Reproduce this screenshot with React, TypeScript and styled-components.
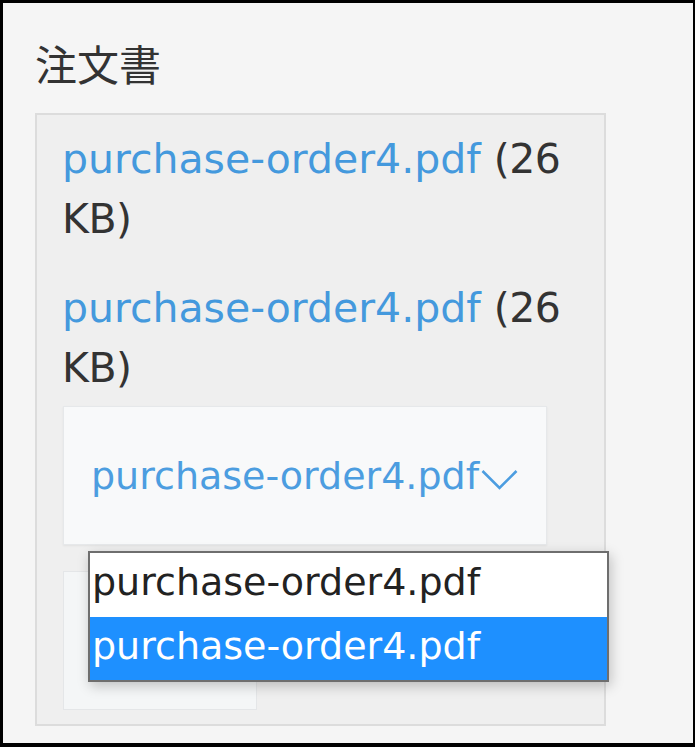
import React from 'react';
import styled, { createGlobalStyle } from 'styled-components';

const GlobalStyle = createGlobalStyle`
  html, body {
    margin: 0;
    padding: 0;
    background: #000;
  }
  * {
    box-sizing: border-box;
  }
`;

const Frame = styled.div`
  width: 695px;
  height: 747px;
  border: 3px solid #000;
  border-right-width: 2px;
  border-bottom-width: 4px;
  background: #f5f5f5;
  padding: 36px 0 0 32px;
  font-family: 'DejaVu Sans', 'Noto Sans CJK JP', sans-serif;
  color: #333;
`;

const Title = styled.h2`
  margin: 0;
  font-size: 42px;
  font-weight: 400;
  line-height: 56px;
  color: #333;
`;

const Panel = styled.div`
  margin-top: 18px;
  width: 571px;
  height: 613px;
  border: 2px solid #dcdcdc;
  background: #efefef;
  padding: 14px 25px 0;
`;

const FileEntry = styled.div`
  font-size: 41px;
  line-height: 60px;
  color: #333;
  & + & {
    margin-top: 29px;
  }
`;

const FileLink = styled.a`
  color: #4499dd;
  text-decoration: none;
`;

const FileSize = styled.span`
  color: #333;
  letter-spacing: -0.5px;
`;

const SelectWrap = styled.div`
  position: relative;
  margin: 8px 0 0 1px;
`;

const SelectBox = styled.div`
  display: flex;
  align-items: center;
  width: 484px;
  height: 139px;
  padding-left: 27px;
  background: #f8f9fa;
  border: 1px solid #e6e8ea;
  box-shadow: 0 1px 2px rgba(0, 0, 0, 0.06);
  font-size: 38px;
  color: #4c9de0;
`;

const Chevron = styled.svg`
  margin-left: 2px;
  margin-top: 8px;
  flex: none;
`;

const Dropdown = styled.ul`
  position: absolute;
  left: 25px;
  top: 145px;
  width: 521px;
  margin: 0;
  padding: 0;
  list-style: none;
  background: #fff;
  border: 2px solid #6e6e6e;
  box-shadow: 2px 4px 12px rgba(0, 0, 0, 0.22);
  z-index: 2;
`;

const Option = styled.li<{ $selected?: boolean }>`
  height: 63.5px;
  padding-left: 2px;
  font-size: 38px;
  line-height: 58px;
  color: ${(p) => (p.$selected ? '#fff' : '#222')};
  background: ${(p) => (p.$selected ? '#1e90ff' : '#fff')};
`;

const AddButton = styled.button`
  display: block;
  margin: 26px 0 0 1px;
  width: 194px;
  height: 139px;
  background: #f4f6f7;
  border: 1px solid #e4e6e8;
  font-family: inherit;
  font-size: 38px;
  color: #555;
`;

const FILE_NAME = 'purchase-order4.pdf';

const App: React.FC = () => {
  return (
    <>
      <GlobalStyle />
      <Frame>
        <Title>注文書</Title>
        <Panel>
          <FileEntry>
            <FileLink href="#">{FILE_NAME}</FileLink> <FileSize>(26 KB)</FileSize>
          </FileEntry>
          <FileEntry>
            <FileLink href="#">{FILE_NAME}</FileLink> <FileSize>(26 KB)</FileSize>
          </FileEntry>
          <SelectWrap>
            <SelectBox>
              {FILE_NAME}
              <Chevron width="37" height="21" viewBox="0 0 37 21">
                <polyline
                  points="1.5,2 18.5,19 35.5,2"
                  fill="none"
                  stroke="#4c9de0"
                  strokeWidth="2.6"
                />
              </Chevron>
            </SelectBox>
            {/* open dropdown list */}
            <Dropdown>
              <Option>{FILE_NAME}</Option>
              <Option $selected>{FILE_NAME}</Option>
            </Dropdown>
          </SelectWrap>
          <AddButton type="button" aria-label="add" />
        </Panel>
      </Frame>
    </>
  );
};

export default App;
